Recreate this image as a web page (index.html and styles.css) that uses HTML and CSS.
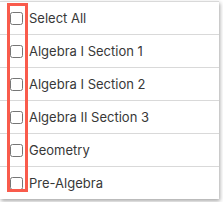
FILE: index.html
```html
<!DOCTYPE html>
<html>
<head>
<meta charset="utf-8">
<link rel="stylesheet" href="styles.css">
</head>
<body>
<div class="panel">
  <label class="row"><input type="checkbox" class="cb"><span>Select All</span></label>
  <label class="row"><input type="checkbox" class="cb"><span>Algebra I Section 1</span></label>
  <label class="row"><input type="checkbox" class="cb"><span>Algebra I Section 2</span></label>
  <label class="row"><input type="checkbox" class="cb"><span>Algebra II Section 3</span></label>
  <label class="row"><input type="checkbox" class="cb"><span>Geometry</span></label>
  <label class="row"><input type="checkbox" class="cb"><span>Pre-Algebra</span></label>
  <div class="highlight"></div>
</div>
</body>
</html>
```
FILE: styles.css
```css
html, body {
  margin: 0;
  padding: 0;
  background: #ffffff;
}
body {
  width: 223px;
  height: 202px;
  overflow: hidden;
}
.panel {
  position: relative;
  margin-top: 1px;
  width: 219px;
  background: #ffffff;
  border-top: 1px solid #d9d9d9;
  box-shadow: 1px 2px 4px rgba(0, 0, 0, 0.35);
  display: flex;
  flex-direction: column;
}
.row {
  height: 32px;
  border-bottom: 1px solid #d9d9d9;
  display: flex;
  align-items: center;
  gap: 6px;
  padding-left: 10px;
  font-family: Inter, "Liberation Sans", sans-serif;
  font-size: 13px;
  color: #383838;
}
.row:last-of-type {
  border-bottom: none;
}
.cb {
  margin: 0;
  width: 13px;
  height: 13px;
}
.highlight {
  position: absolute;
  left: 7px;
  top: 1px;
  width: 15px;
  height: 183px;
  border: 3.5px solid #f95b4c;
}
```
